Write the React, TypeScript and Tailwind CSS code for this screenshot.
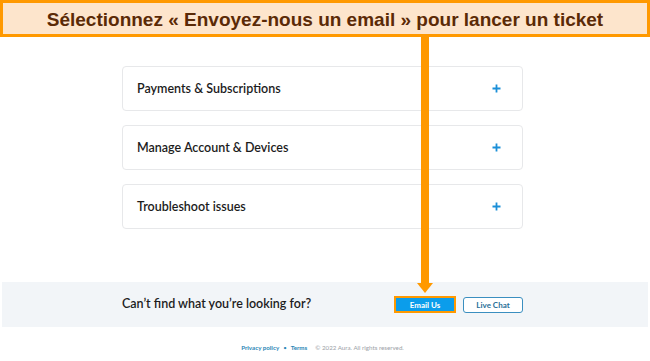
import React from 'react';

const topics = ['Payments & Subscriptions', 'Manage Account & Devices', 'Troubleshoot issues'];

function Plus() {
  return (
    <svg width="9" height="9" viewBox="0 0 9 9" className="block">
      <path d="M4.5 0.5v8M0.5 4.5h8" stroke="#1b8fd8" strokeWidth="1.8" />
    </svg>
  );
}

export default function App() {
  return (
    <div className="relative w-[650px] h-[361px] overflow-hidden bg-white font-['Lato','Noto_Sans',sans-serif]">
      {/* annotation banner */}
      <div className="h-[37px] border-[3px] border-[#ff9900] bg-[#fde5cc] flex items-center justify-center">
        <span className="font-['Liberation_Sans',Arial,sans-serif] font-bold text-[19px] text-[#5b2a06] leading-none pt-[2px]">
          Sélectionnez « Envoyez-nous un email » pour lancer un ticket
        </span>
      </div>

      {/* topic cards */}
      <div className="ml-[122px] w-[401px] mt-[29px] flex flex-col gap-[14px]">
        {topics.map((t) => (
          <div
            key={t}
            className="h-[45px] border border-[#e7e8ea] rounded-[4px] pl-[14px] pr-[21px] flex items-center justify-between"
          >
            <span className="text-[12.5px] font-semibold text-[#1c1c1c] pt-[2px]">{t}</span>
            <Plus />
          </div>
        ))}
      </div>

      {/* contact band */}
      <div className="mt-[53px] mx-[2px] h-[45px] bg-[#f2f5f8]">
        <div className="ml-[120px] w-[401px] h-full flex items-center justify-between">
          <span className="text-[12.5px] font-semibold text-[#1c1c1c]">Can’t find what you’re looking for?</span>
          <div className="flex items-center gap-[7px]">
            <div className="w-[62px] h-[17px] border-2 border-[#ff9900] bg-[#0b9deb] flex items-center justify-center">
              <span className="text-[8px] font-bold text-white leading-none">Email Us</span>
            </div>
            <div className="w-[60px] h-[16px] border border-[#3b8fc0] rounded-[3px] bg-white flex items-center justify-center">
              <span className="text-[8px] font-bold text-[#2a6f98] leading-none">Live Chat</span>
            </div>
          </div>
        </div>
      </div>

      {/* footer */}
      <div className="ml-[122px] w-[401px] mt-[16px] flex items-center justify-center gap-[4px] text-[6.2px] leading-[10px]">
        <span className="font-bold text-[#2b86b6]">Privacy policy</span>
        <span className="text-[#2b86b6]">•</span>
        <span className="font-bold text-[#2b86b6]">Terms</span>
        <span className="ml-[4px] text-[#9aa0a6]">© 2022 Aura. All rights reserved.</span>
      </div>

      {/* annotation arrow */}
      <svg className="absolute left-[415px] top-[37px]" width="20" height="258" viewBox="0 0 20 258">
        <rect x="6" y="0" width="8" height="247" fill="#ff9900" />
        <polygon points="2,246 18,246 10,256" fill="#ff9900" />
      </svg>
    </div>
  );
}
